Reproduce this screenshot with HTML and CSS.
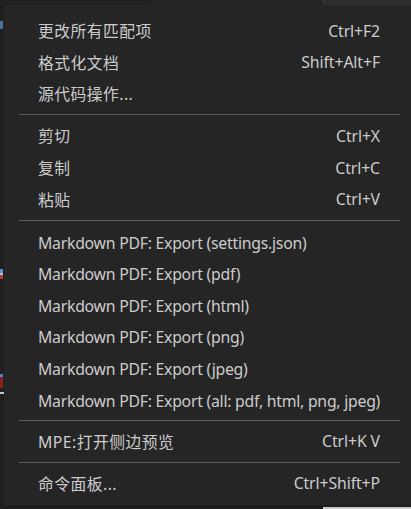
FILE: index.html
```html
<!DOCTYPE html>
<html lang="zh-CN">
<head>
<meta charset="utf-8">
<link rel="stylesheet" href="styles.css">
</head>
<body>
<div class="topbar">
  <div class="seg seg-a"></div>
  <div class="seg seg-b"></div>
  <div class="seg seg-c"></div>
</div>
<div class="main">
  <div class="gutter">
    <div class="frag frag-1"></div>
    <div class="frag frag-2"></div>
    <div class="frag frag-3"></div>
    <div class="frag frag-4"></div>
  </div>
  <div class="menu">
    <div class="item"><span class="label cjk">更改所有匹配项</span><span class="key">Ctrl+F2</span></div>
    <div class="item"><span class="label cjk">格式化文档</span><span class="key">Shift+Alt+F</span></div>
    <div class="item"><span class="label cjk">源代码操作...</span></div>
    <div class="sep"></div>
    <div class="item"><span class="label cjk">剪切</span><span class="key">Ctrl+X</span></div>
    <div class="item"><span class="label cjk">复制</span><span class="key">Ctrl+C</span></div>
    <div class="item"><span class="label cjk">粘贴</span><span class="key">Ctrl+V</span></div>
    <div class="sep"></div>
    <div class="item md"><span class="label">Markdown PDF: Export (settings.json)</span></div>
    <div class="item md"><span class="label">Markdown PDF: Export (pdf)</span></div>
    <div class="item md"><span class="label">Markdown PDF: Export (html)</span></div>
    <div class="item md"><span class="label">Markdown PDF: Export (png)</span></div>
    <div class="item md"><span class="label">Markdown PDF: Export (jpeg)</span></div>
    <div class="item md"><span class="label">Markdown PDF: Export (all: pdf, html, png, jpeg)</span></div>
    <div class="sep"></div>
    <div class="item"><span class="label cjk">MPE:打开侧边预览</span><span class="key">Ctrl+K V</span></div>
    <div class="sep"></div>
    <div class="item"><span class="label cjk">命令面板...</span><span class="key">Ctrl+Shift+P</span></div>
  </div>
</div>
<div class="bottombar">
  <div class="bottom-light"></div>
</div>
</body>
</html>
```
FILE: styles.css
```css
html, body {
  margin: 0;
  padding: 0;
  background: #1e1e1e;
  width: 411px;
  height: 509px;
  overflow: hidden;
}

.topbar {
  display: flex;
  height: 5px;
}

.seg-a {
  width: 150px;
  background: #202021;
}

.seg-b {
  width: 173px;
  background: #242425;
}

.seg-c {
  flex: 1;
  background: #2d2d2d;
  border-left: 1px solid #3a3a3a;
}

.main {
  display: flex;
  overflow: hidden;
}

.gutter {
  width: 4px;
  flex: none;
  height: 500px;
  background: #1e1e1e;
  display: flex;
  flex-direction: column;
}

.frag {
  width: 3px;
  flex: none;
}

.frag-1 {
  margin-top: 16px;
  height: 8px;
  background: #4a6f8f;
}

.frag-2 {
  margin-top: 240px;
  height: 10px;
  background: linear-gradient(#5a8fd0 0 40%, #c0c0c0 40% 60%, #b04040 60%);
}

.frag-3 {
  margin-top: 95px;
  height: 14px;
  background: linear-gradient(#4a7fc0 0 20%, #8b1f1f 20%);
}

.frag-4 {
  margin-top: 4px;
  height: 2px;
  width: 4px;
  background: #c8c8c8;
}

.menu {
  flex: none;
  width: 411px;
  height: 500px;
  box-sizing: border-box;
  background: #252526;
  padding: 10px 0 0 0;
  font-family: "Segoe UI", "Noto Sans", "Noto Sans CJK SC", sans-serif;
  font-size: 15.8px;
  color: #cccccc;
}

.item {
  display: flex;
  align-items: center;
  justify-content: space-between;
  height: 31.6px;
  box-sizing: border-box;
  padding: 0 35px 0 34px;
  white-space: nowrap;
}

.item.md {
  padding-top: 3px;
}

.label {
  letter-spacing: -0.25px;
}

.label.cjk {
  letter-spacing: 0.45px;
}

.key {
  letter-spacing: -0.1px;
}

.sep {
  height: 10.4px;
  margin: 0 15px;
  display: flex;
  align-items: center;
}

.sep::before {
  content: "";
  flex: 1;
  height: 1px;
  background: #5a5a5a;
}

.bottombar {
  height: 4px;
  background: #1e1e1e;
  display: flex;
  justify-content: flex-end;
  align-items: flex-end;
}

.bottom-light {
  width: 88px;
  height: 2px;
  background: #c8c8c8;
}
```
